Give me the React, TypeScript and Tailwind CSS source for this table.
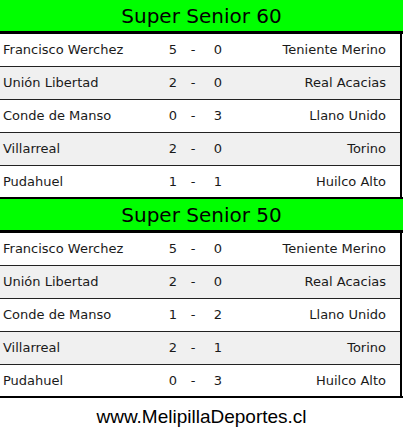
type Match = {
  home: string;
  homeGoals: number;
  awayGoals: number;
  away: string;
};

type Division = {
  title: string;
  matches: Match[];
};

const divisions: Division[] = [
  {
    title: "Super Senior 60",
    matches: [
      { home: "Francisco Werchez", homeGoals: 5, awayGoals: 0, away: "Teniente Merino" },
      { home: "Unión Libertad", homeGoals: 2, awayGoals: 0, away: "Real Acacias" },
      { home: "Conde de Manso", homeGoals: 0, awayGoals: 3, away: "Llano Unido" },
      { home: "Villarreal", homeGoals: 2, awayGoals: 0, away: "Torino" },
      { home: "Pudahuel", homeGoals: 1, awayGoals: 1, away: "Huilco Alto" },
    ],
  },
  {
    title: "Super Senior 50",
    matches: [
      { home: "Francisco Werchez", homeGoals: 5, awayGoals: 0, away: "Teniente Merino" },
      { home: "Unión Libertad", homeGoals: 2, awayGoals: 0, away: "Real Acacias" },
      { home: "Conde de Manso", homeGoals: 1, awayGoals: 2, away: "Llano Unido" },
      { home: "Villarreal", homeGoals: 2, awayGoals: 1, away: "Torino" },
      { home: "Pudahuel", homeGoals: 0, awayGoals: 3, away: "Huilco Alto" },
    ],
  },
];

function DivisionTable({ division }: { division: Division }) {
  return (
    <div className="border-b-2 border-black">
      {/* cabecera */}
      <div className="flex h-[34px] items-center justify-center border-b-[3px] border-black bg-[#00ff00] pt-[1px] text-[20px] text-black">
        {division.title}
      </div>

      {/* partidos */}
      <div className="w-[402px] border-r-2 border-black">
        {division.matches.map((m, i) => {
          const last = i === division.matches.length - 1;
          return (
            <div
              key={i}
              className={
                "flex items-center text-[13px] text-[#1a1a1a] " +
                (i % 2 === 1 ? "bg-[#f0f0f0] " : "bg-white ") +
                (last ? "h-[31px]" : "h-[33px] border-b border-[#222]")
              }
            >
              <div className="w-[160px] pl-[3px]">{m.home}</div>
              <div className="w-[26px] text-center">{m.homeGoals}</div>
              <div className="w-[14px] text-center">-</div>
              <div className="w-[36px] text-center">{m.awayGoals}</div>
              <div className="flex-1 pr-[14px] text-right">{m.away}</div>
            </div>
          );
        })}
      </div>
    </div>
  );
}

export default function App() {
  return (
    <div className="h-[444px] w-[403px] bg-white font-['DejaVu_Sans',sans-serif]">
      {divisions.map((d) => (
        <DivisionTable key={d.title} division={d} />
      ))}

      <div className="flex h-[38px] items-center justify-center font-['Liberation_Sans',Arial,sans-serif] text-[19px] text-black">
        www.MelipillaDeportes.cl
      </div>
    </div>
  );
}
